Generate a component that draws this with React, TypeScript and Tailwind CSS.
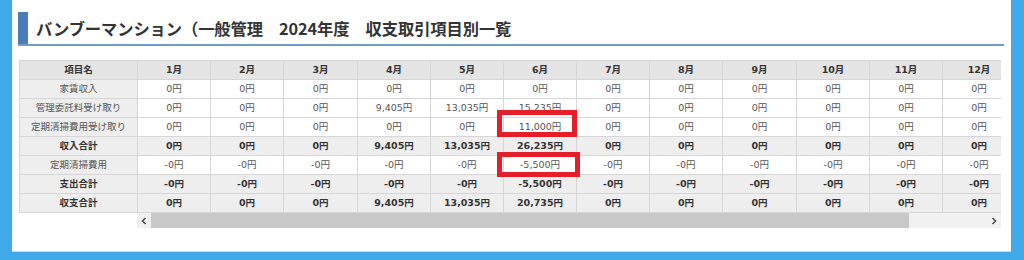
import React from "react";

const months = ["1月","2月","3月","4月","5月","6月","7月","8月","9月","10月","11月","12月"];
const widths = [73,73,74,73,73,73,73,73,74,73,73,73];

type Row = { label: string; vals: string[]; total?: boolean };

const z = (s: string) => Array(12).fill(s);
const rows: Row[] = [
  { label: "家賃収入", vals: z("0円") },
  { label: "管理委託料受け取り", vals: ["0円","0円","0円","9,405円","13,035円","15,235円","0円","0円","0円","0円","0円","0円"] },
  { label: "定期清掃費用受け取り", vals: ["0円","0円","0円","0円","0円","11,000円","0円","0円","0円","0円","0円","0円"] },
  { label: "収入合計", vals: ["0円","0円","0円","9,405円","13,035円","26,235円","0円","0円","0円","0円","0円","0円"], total: true },
  { label: "定期清掃費用", vals: ["-0円","-0円","-0円","-0円","-0円","-5,500円","-0円","-0円","-0円","-0円","-0円","-0円"] },
  { label: "支出合計", vals: ["-0円","-0円","-0円","-0円","-0円","-5,500円","-0円","-0円","-0円","-0円","-0円","-0円"], total: true },
  { label: "収支合計", vals: ["0円","0円","0円","9,405円","13,035円","20,735円","0円","0円","0円","0円","0円","0円"], total: true },
];

export default function App() {
  return (
    <div
      className="w-[1024px] h-[260px] bg-[#3fa9ea] pl-[12px] pr-[13px] pb-[8px] overflow-hidden"
      style={{ fontFamily: '"Noto Sans CJK JP", "Noto Sans", sans-serif' }}
    >
      <div className="bg-white h-full pt-[12px] pl-[6px] pr-[7px] border-b border-[#bfe0f6]">
        <div className="flex items-stretch h-[34px] border-b-2 border-[#6f9ccb]">
          <div className="w-[10px] bg-[#4a7db5]" />
          <div className="flex items-center pl-[8px] text-[16.3px] font-bold text-[#333] tracking-[-0.1px] leading-none">
            バンブーマンション（一般管理　2024年度　収支取引項目別一覧
          </div>
        </div>
        <div className="relative mt-[14px] ml-[1px] w-[982px]">
          <div className="w-[982px] overflow-hidden">
            <table
              className="border-collapse table-fixed text-[9.5px]"
              style={{ width: 118 + widths.reduce((a, b) => a + b, 0), fontFamily: '"DejaVu Sans", "Noto Sans CJK JP", sans-serif' }}
            >
              <colgroup>
                <col style={{ width: 118 }} />
                {widths.map((w, i) => (
                  <col key={i} style={{ width: w }} />
                ))}
              </colgroup>
              <thead>
                <tr className="bg-[#e5e5e5]">
                  <th className="h-[19px] p-0 border border-[#d6d6d6] font-bold text-[#333] text-center">項目名</th>
                  {months.map((m) => (
                    <th key={m} className="h-[19px] p-0 border border-[#d6d6d6] font-bold text-[#333] text-center">{m}</th>
                  ))}
                </tr>
              </thead>
              <tbody>
                {rows.map((r) => (
                  <tr key={r.label} className={r.total ? "bg-[#eeeeee]" : "bg-white"}>
                    <td className={`h-[19px] p-0 border border-[#d6d6d6] bg-[#eeeeee] text-center ${r.total ? "font-bold text-[#333]" : "text-[#555]"}`}>{r.label}</td>
                    {r.vals.map((v, i) => (
                      <td key={i} className={`h-[19px] p-0 border border-[#d6d6d6] text-center ${r.total ? "font-bold text-[#333]" : "text-[#555]"}`}>{v}</td>
                    ))}
                  </tr>
                ))}
              </tbody>
            </table>
          </div>
          <div className="ml-[118px] w-[864px] h-[15px] bg-[#f1f1f1] flex items-center">
            <div className="w-[14px] h-full flex items-center justify-center">
              <svg width="6" height="8" viewBox="0 0 6 8"><path d="M4.5 1 L1.5 4 L4.5 7" fill="none" stroke="#505050" strokeWidth="1.6" /></svg>
            </div>
            <div className="w-[758px] h-full bg-[#c8c8c8]" />
            <div className="flex-1" />
            <div className="w-[14px] h-full flex items-center justify-center">
              <svg width="6" height="8" viewBox="0 0 6 8"><path d="M1.5 1 L4.5 4 L1.5 7" fill="none" stroke="#505050" strokeWidth="1.6" /></svg>
            </div>
          </div>
          <div className="absolute left-[478px] top-[50px] w-[80px] h-[27px] border-[5px] border-[#e61e2a]" />
          <div className="absolute left-[478px] top-[92px] w-[83px] h-[25px] border-[5px] border-[#e61e2a]" />
        </div>
      </div>
    </div>
  );
}
